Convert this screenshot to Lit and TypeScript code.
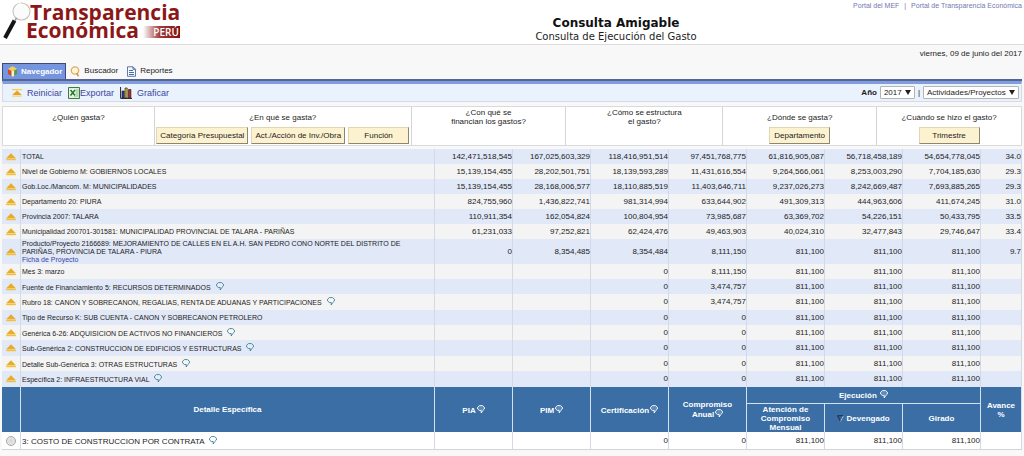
import { LitElement, html, css, svg, nothing } from "lit";
import { customElement, state } from "lit/decorators.js";

interface Level {
  label: string;
  values: string[];
  link?: string;
  note?: boolean;
  kind?: string;
}

const same = ["811,100", "811,100", "811,100"];

const LEVELS: Level[] = [
  { label: "TOTAL", values: ["142,471,518,545", "167,025,603,329", "118,416,951,514", "97,451,768,775", "61,816,905,087", "56,718,458,189", "54,654,778,045", "34.0"] },
  { label: "Nivel de Gobierno M: GOBIERNOS LOCALES", values: ["15,139,154,455", "28,202,501,751", "18,139,593,289", "11,431,616,554", "9,264,566,061", "8,253,003,290", "7,704,185,630", "29.3"] },
  { label: "Gob.Loc./Mancom. M: MUNICIPALIDADES", values: ["15,139,154,455", "28,168,006,577", "18,110,885,519", "11,403,646,711", "9,237,026,273", "8,242,669,487", "7,693,885,265", "29.3"] },
  { label: "Departamento 20: PIURA", values: ["824,755,960", "1,436,822,741", "981,314,994", "633,644,902", "491,309,313", "444,963,606", "411,674,245", "31.0"] },
  { label: "Provincia 2007: TALARA", values: ["110,911,354", "162,054,824", "100,804,954", "73,985,687", "63,369,702", "54,226,151", "50,433,795", "33.5"] },
  { label: "Municipalidad 200701-301581: MUNICIPALIDAD PROVINCIAL DE TALARA - PARIÑAS", values: ["61,231,033", "97,252,821", "62,424,476", "49,463,903", "40,024,310", "32,477,843", "29,746,647", "33.4"] },
  { label: "Producto/Proyecto 2166689: MEJORAMIENTO DE CALLES EN EL A.H. SAN PEDRO CONO NORTE DEL DISTRITO DE PARIÑAS, PROVINCIA DE TALARA - PIURA", link: "Ficha de Proyecto", kind: "project", values: ["0", "8,354,485", "8,354,484", "8,111,150", ...same, "9.7"] },
  { label: "Mes 3: marzo", values: ["", "", "0", "8,111,150", ...same, ""] },
  { label: "Fuente de Financiamiento 5: RECURSOS DETERMINADOS", note: true, values: ["", "", "0", "3,474,757", ...same, ""] },
  { label: "Rubro 18: CANON Y SOBRECANON, REGALIAS, RENTA DE ADUANAS Y PARTICIPACIONES", note: true, kind: "tall", values: ["", "", "0", "3,474,757", ...same, ""] },
  { label: "Tipo de Recurso K: SUB CUENTA - CANON Y SOBRECANON PETROLERO", values: ["", "", "0", "0", ...same, ""] },
  { label: "Genérica 6-26: ADQUISICION DE ACTIVOS NO FINANCIEROS", note: true, values: ["", "", "0", "0", ...same, ""] },
  { label: "Sub-Genérica 2: CONSTRUCCION DE EDIFICIOS Y ESTRUCTURAS", note: true, kind: "tall", values: ["", "", "0", "0", ...same, ""] },
  { label: "Detalle Sub-Genérica 3: OTRAS ESTRUCTURAS", note: true, values: ["", "", "0", "0", ...same, ""] },
  { label: "Específica 2: INFRAESTRUCTURA VIAL", note: true, kind: "tall", values: ["", "", "0", "0", ...same, ""] },
];

const QUESTIONS: { text: string[]; buttons: string[] }[] = [
  { text: ["¿Quién gasta?"], buttons: [] },
  { text: ["¿En qué se gasta?"], buttons: ["Categoría Presupuestal", "Act./Acción de Inv./Obra", "Función"] },
  { text: ["¿Con qué se", "financian los gastos?"], buttons: [] },
  { text: ["¿Cómo se estructura", "el gasto?"], buttons: [] },
  { text: ["¿Dónde se gasta?"], buttons: ["Departamento"] },
  { text: ["¿Cuándo se hizo el gasto?"], buttons: ["Trimestre"] },
];

const balloon = html`<svg class="balloon" viewBox="0 0 8 9" aria-hidden="true">
  ${svg`<path d="M2.400 .6h3.100L7.400 2.200v1.800L5.800 5.500 4.200 8V5.500H2.400L.6 4v-1.800z" fill="#fff" fill-opacity=".2" stroke="currentColor" stroke-width=".9"/>`}
</svg>`;

const upArrow = html`<svg class="up" viewBox="0 0 10 8" aria-hidden="true">
  ${svg`<path d="M5 .3 9.800 5.200H.2z" fill="#e9ac25"/><path d="M.2 5.600h9.600v1.600H.2z" fill="#f0c03c"/>`}
</svg>`;

@customElement("app-root")
export class AppRoot extends LitElement {
  @state() private chosen = false;

  static styles = css`
    :host {
      display: block;
      min-height: 100vh;
      background: #f8f8f8;
      color: #1c1c1c;
      font: 8px/10px "Liberation Sans", Arial, sans-serif;
    }
    * { box-sizing: border-box; }
    a { color: #3c46a0; text-decoration: none; }
    button, select, input { font: inherit; color: inherit; margin: 0; }

    .top {
      display: grid;
      grid-template-columns: 208px 1fr;
      height: 45px;
      padding: 0 2px;
      background: #fff;
      border-bottom: 1px solid #dcdcdc;
    }
    .logo { display: flex; color: #8c1717; }
    .lens { width: 32px; height: 42px; margin-right: -8px; flex: none; }
    .words { font: 700 21px/18px "Open Sans", sans-serif; padding-top: 3px; }
    .first { display: block; padding-left: 4px; }
    .second { display: flex; align-items: center; gap: 4px; }
    .peru {
      width: 37px;
      margin-top: 3px;
      padding-right: 1px;
      font: 600 10px/12px "Open Sans", sans-serif;
      text-align: right;
      color: #fff;
      background: linear-gradient(90deg, #fff, #a33b3b 45%, #861010);
    }
    .title { text-align: center; font-family: "DejaVu Sans", Verdana, sans-serif; }
    h1 { margin: 6px 0 0; font-size: 12px; line-height: 13px; color: #111; }
    .title p { margin: 0; font-size: 10px; line-height: 13px; }
    .portals { padding-top: 1px; font-size: 7px; text-align: right; color: #7c7ca8; }
    .portals a { color: #7476b4; }
    .portals span { padding: 0 3px; }

    .date { margin: 0; padding: 4px 2px; text-align: right; }
    .tabs {
      display: flex;
      align-items: flex-end;
      margin: 0 2px;
      border-bottom: 2px solid #56658f;
    }
    .tab {
      display: flex;
      align-items: center;
      height: 16px;
      padding: 0 4px;
      gap: 3px;
      color: #1c1c1c;
    }
    .tab.on {
      padding: 0 3px 0 4px;
      border: 1px solid #3c4a80;
      border-bottom: 0;
      background: #7596df;
      color: #fff;
      font-weight: 700;
    }
    .ico { width: 11px; height: 11px; flex: none; }
    .bar {
      display: flex;
      align-items: center;
      justify-content: space-between;
      height: 21px;
      margin: 0 2px 4px;
      padding: 0 2px 0 9px;
      border: 1px solid #d5dbe6;
      border-top: 3px solid #7f9ddf;
      background: #e9f2fd;
    }
    .tools, .filters { display: flex; align-items: center; }
    .tools { gap: 6px; font-size: 9px; }
    .tools a { display: flex; align-items: center; gap: 5px; }
    .tools .tight { gap: 0; }
    .tools .ico { width: 12px; height: 12px; }
    .filters { gap: 3px; }
    .filters label { font-weight: 700; }
    .pick { position: relative; display: flex; }
    .pick select {
      appearance: none;
      height: 13px;
      padding: 0 12px 0 3px;
      border: 1px solid #b4b4b4;
      border-radius: 1px;
      background: #fff;
    }
    .pick svg { position: absolute; right: 4px; top: 4px; width: 6px; height: 5px; pointer-events: none; }

    .questions {
      display: grid;
      grid-template-columns: 151fr 257fr 155fr 157fr 154fr 145fr;
      margin: 0 2px 3px;
      border: 1px solid #dadada;
      background: #fff;
    }
    .q {
      display: flex;
      flex-direction: column;
      align-items: center;
      height: 38px;
      text-align: center;
      border-left: 1px solid #d4d4d4;
    }
    .q:first-child { border-left: 0; }
    .q p { display: flex; flex-direction: column; justify-content: center; margin: 0; height: 20px; line-height: 9px; }
    .q .btns { display: flex; gap: 3px; }
    .q button {
      height: 17px;
      min-width: 61px;
      padding: 0 3px;
      background: #fdf2cf;
      border: 1px solid #e0d6b4;
      border-right-color: #8b8672;
      border-bottom-color: #8b8672;
      white-space: nowrap;
    }

    table { width: calc(100% - 4px); margin: 0 2px; border-collapse: separate; border-spacing: 0; table-layout: fixed; }
    .c-icon { width: 19px; }
    .c-num { width: 78px; }
    .c-pct { width: 41px; }
    td { height: 15px; padding: 0; text-align: right; border-right: 1px solid #d4d9e6; }
    .tall td { height: 16px; }
    .project td { height: 25px; }
    .level:nth-child(odd) { background: #e1e8f7; }
    .level:nth-child(even) { background: #f4f4f5; }
    td.mark { text-align: center; line-height: 0; }
    td.name { padding: 0 1px; text-align: left; font-size: 7px; line-height: 8px; }
    td.name a { display: block; }
    .up { width: 10px; height: 8px; }
    .balloon { width: 8px; height: 9px; margin-left: 3px; color: #3f7f9a; vertical-align: -1px; }
    th {
      padding: 0 2px;
      background: #3a6ea5;
      color: #fff;
      line-height: 9px;
      border-right: 1px solid #d5e0ee;
    }
    th .balloon { margin-left: 1px; color: #fff; vertical-align: -1px; }
    .h1 th { height: 16px; }
    .h2 th { height: 29px; border-top: 1px solid #d5e0ee; }
    .sort { width: 7px; height: 7px; vertical-align: -1px; }
    .detail td { height: 18px; background: #fff; border-bottom: 1px solid #d4d4d4; }
    .detail td.name { font-size: 8px; }
    .detail input {
      appearance: none;
      width: 10px;
      height: 10px;
      border: 1px solid #a6a6a6;
      border-radius: 50%;
      background: radial-gradient(#d6d6d6, #efefef);
    }
    .detail input:checked { background: radial-gradient(#444 30%, #eee 40%); }
  `;

  private caret() {
    return html`<svg viewBox="0 0 6 5" aria-hidden="true">${svg`<path d="M0 0h6L3 5z" fill="#222"/>`}</svg>`;
  }

  private header() {
    return html`<header class="top">
      <div class="logo">
        <svg class="lens" viewBox="0 0 32 42" aria-hidden="true">
          ${svg`<circle cx="19.500" cy="11.500" r="8.500" fill="#fbfbfb" stroke="#c9bfbb" stroke-width="1.100"/>
          <path d="M14 8a7 7 0 0 1 5-4" fill="none" stroke="#fff" stroke-width="2"/>
          <path d="M13 20.500 14.500 18" stroke="#999" stroke-width="1.500"/>
          <path d="M12.500 20.500 3 38" stroke="#151515" stroke-width="4"/>`}
        </svg>
        <div class="words">
          <span class="first">Transparencia</span>
          <span class="second">Económica <span class="peru">PERÚ</span></span>
        </div>
      </div>
      <div>
        <nav class="portals"><a href="#mef">Portal del MEF</a><span> | </span><a href="#pte">Portal de Transparencia Económica</a></nav>
        <div class="title">
          <h1>Consulta Amigable</h1>
          <p>Consulta de Ejecución del Gasto</p>
        </div>
      </div>
    </header>`;
  }

  private tabs() {
    return html`<nav class="tabs">
      <a class="tab on" href="#navegador">
        <svg class="ico" viewBox="0 0 11 11" aria-hidden="true">${svg`<path d="M1 3.500 5.500 5.500V10.500L1 8z" fill="#d8442c"/><path d="M10 3.500 5.500 5.500V10.500L10 8z" fill="#4fa04a"/><path d="M5.500 .3 10 2.800 5.500 5.500 1 2.800z" fill="#f3cf4c"/><path d="M4.500 5h2.600V10L5.500 10.700 4.500 10z" fill="#f7f3d8"/>`}</svg>
        Navegador</a>
      <a class="tab" href="#buscador">
        <svg class="ico" viewBox="0 0 11 11" aria-hidden="true">${svg`<circle cx="5" cy="4.500" r="3.700" fill="#fdf4dc" stroke="#dcae62" stroke-width="1.300"/><path d="M6.800 7.200 8.500 10.300" stroke="#cf9440" stroke-width="1.500"/>`}</svg>
        Buscador</a>
      <a class="tab" href="#reportes">
        <svg class="ico" viewBox="0 0 11 11" aria-hidden="true">${svg`<path d="M1.500 .8h5.500l2.500 2.500v7h-8z" fill="#f4f8ff" stroke="#4a6da8" stroke-width=".9"/><path d="M7 .8v2.500h2.500M3 4.500h4M3 6.500h5M3 8.500h5" fill="none" stroke="#4a6da8"/>`}</svg>
        Reportes</a>
    </nav>`;
  }

  private toolbar() {
    return html`<div class="bar">
      <div class="tools">
        <a href="#reiniciar"><svg class="up" viewBox="0 0 10 8" aria-hidden="true">${svg`<path d="M0 0h10v1.200H0z" fill="#f5cb52"/><path d="M5 1.500 9.800 6H.2z" fill="#e9a21c"/><path d="M.2 6.600h9.600v1H.2z" fill="#f5cb52"/>`}</svg>Reiniciar</a>
        <a class="tight" href="#exportar"><svg class="ico" viewBox="0 0 12 12" aria-hidden="true">${svg`<path d="M.5 .5h11v11H.5z" fill="#dfeedd" stroke="#3b7d3c"/><path d="M6 3h4.500M6 5h4.500M6 7h4.500M6 9h4.500" stroke="#7aa67a" stroke-width=".8"/><path d="M1.500 2h6v7h-6z" fill="#f2faf0"/><path d="M2.500 3 7 8.500M7 3 2.500 8.500" stroke="#1f7a2e" stroke-width="1.600"/>`}</svg>Exportar</a>
        <a href="#graficar"><svg class="ico" viewBox="0 0 12 12" aria-hidden="true">${svg`<path d="M.6 0v11.400H12" fill="none" stroke="#222"/><path d="M2 4h2.200v7H2z" fill="#2440b0" stroke="#111" stroke-width=".6"/><path d="M5 1h2.200v10H5z" fill="#e4b52c" stroke="#111" stroke-width=".6"/><path d="M8.500 2.500h2.400V11H8.500z" fill="#b02a2a" stroke="#111" stroke-width=".6"/>`}</svg>Graficar</a>
      </div>
      <div class="filters">
        <label for="year">Año</label>
        <span class="pick"><select id="year"><option>2017</option><option>2016</option></select>${this.caret()}</span>
        <span>|</span>
        <span class="pick"><select aria-label="Tipo"><option>Actividades/Proyectos</option><option>Proyectos</option></select>${this.caret()}</span>
      </div>
    </div>`;
  }

  render() {
    return html`
      ${this.header()}
      <p class="date">viernes, 09 de junio del 2017</p>
      ${this.tabs()} ${this.toolbar()}
      <section class="questions">
        ${QUESTIONS.map((q) => html`<div class="q">
          <p>${q.text.map((t) => html`<span>${t}</span>`)}</p>
          <div class="btns">${q.buttons.map((b) => html`<button type="button">${b}</button>`)}</div>
        </div>`)}
      </section>
      <table>
        <colgroup>
          <col class="c-icon" /><col />
          ${[0, 1, 2, 3, 4, 5, 6].map(() => html`<col class="c-num" />`)}
          <col class="c-pct" />
        </colgroup>
        <tbody>
          ${LEVELS.map((l) => html`<tr class="level ${l.kind ?? ""}">
            <td class="mark">${upArrow}</td>
            <td class="name">${l.label} ${l.note ? balloon : nothing}${l.link ? html`<a href="#ficha">${l.link}</a>` : nothing}</td>
            ${l.values.map((v) => html`<td>${v}</td>`)}
          </tr>`)}
        </tbody>
        <tbody>
          <tr class="h1">
            <th rowspan="2"></th>
            <th rowspan="2">Detalle Específica</th>
            <th rowspan="2">PIA${balloon}</th>
            <th rowspan="2">PIM${balloon}</th>
            <th rowspan="2">Certificación${balloon}</th>
            <th rowspan="2">Compromiso Anual${balloon}</th>
            <th colspan="3">Ejecución ${balloon}</th>
            <th rowspan="2">Avance %</th>
          </tr>
          <tr class="h2">
            <th>Atención de Compromiso Mensual</th>
            <th><svg class="sort" viewBox="0 0 7 7" aria-hidden="true">${svg`<path d="M.5 .7h6L3.500 6.500z" fill="#3a5f94" stroke="#14233c" stroke-width=".8"/><path d="M6.500 .7 3.500 6.500" stroke="#dce6f2" stroke-width=".8"/>`}</svg> Devengado</th>
            <th>Girado</th>
          </tr>
          <tr class="detail">
            <td class="mark"><input id="d3" type="radio" name="detalle" .checked=${this.chosen} @change=${() => (this.chosen = true)} /></td>
            <td class="name"><label for="d3">3: COSTO DE CONSTRUCCION POR CONTRATA</label> ${balloon}</td>
            ${["", "", "0", "0", ...same, ""].map((v) => html`<td>${v}</td>`)}
          </tr>
        </tbody>
      </table>
    `;
  }
}
